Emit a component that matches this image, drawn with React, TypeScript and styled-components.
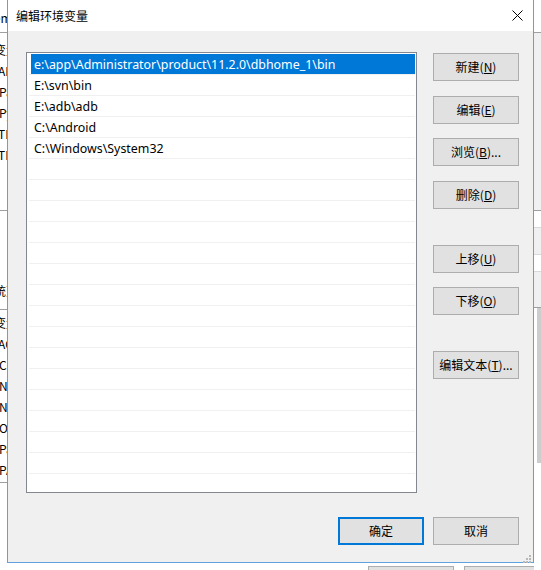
import React from 'react';
import styled, { createGlobalStyle } from 'styled-components';

const GlobalStyle = createGlobalStyle`
  html, body { margin: 0; padding: 0; background: #ffffff; overflow: hidden; }
  body {
    font-family: "Noto Sans", "Noto Sans CJK SC", sans-serif;
    font-size: 12px;
    color: #000;
  }
`;

const CJK = `"Noto Sans CJK SC", "Noto Sans", sans-serif`;
const LATIN = `"Noto Sans", "Noto Sans CJK SC", sans-serif`;

/* ---------- background window (visible only at the edges) ---------- */

const Desktop = styled.div`
  position: relative;
  width: 541px;
  height: 570px;
  overflow: hidden;
  background: #ffffff;
`;

const BgWindow = styled.div`
  display: flex;
  height: 100%;
`;

const BgLeft = styled.div`
  width: 7px;
  flex-shrink: 0;
  overflow: hidden;
  display: flex;
  flex-direction: column;
  background: #ffffff;
  padding-top: 6px;
  box-sizing: border-box;
`;

const BgRow = styled.div<{ $shift: number; $h?: number; $top?: number }>`
  height: ${(p) => p.$h ?? 21}px;
  line-height: ${(p) => p.$h ?? 21}px;
  margin-top: ${(p) => p.$top ?? 0}px;
  white-space: nowrap;
  margin-left: ${(p) => p.$shift}px;
  font-family: ${CJK};
  font-size: 12px;
  color: #000;
  flex-shrink: 0;
`;

const BgLine = styled.div<{ $gap: number }>`
  height: 1px;
  background: #a0a0a0;
  margin-top: ${(p) => p.$gap}px;
  flex-shrink: 0;
`;

const BgMiddle = styled.div`
  flex: 1;
  min-width: 0;
  overflow: hidden;
  display: flex;
  flex-direction: column;
  padding-top: 566px;
`;

const BgButtons = styled.div`
  display: flex;
  gap: 10px;
  padding-left: 361px;
`;

const BgButton = styled.div`
  width: 86px;
  height: 24px;
  flex-shrink: 0;
  box-sizing: border-box;
  border: 1px solid #adadad;
  background: #e1e1e1;
`;

const BgRight = styled.div`
  width: 7px;
  flex-shrink: 0;
  display: flex;
  flex-direction: column;
  background: #f0f0f0;
`;

const BgRightTop = styled.div`
  height: 32px;
  background: #ffffff;
  border-bottom: 1px solid #a0a0a0;
  flex-shrink: 0;
`;

const BgRightCell = styled.div<{ $h: number; $bg: string; $line?: string }>`
  height: ${(p) => p.$h}px;
  background: ${(p) => p.$bg};
  border-bottom: 1px solid ${(p) => p.$line ?? '#d9d9d9'};
  flex-shrink: 0;
`;

const BgScroll = styled.div`
  flex: 1;
  display: flex;
  justify-content: flex-end;
  background: #ffffff;
`;

const BgThumb = styled.div`
  width: 4px;
  height: 155px;
  background: #cdcdcd;
`;

/* ---------- dialog ---------- */

const Dialog = styled.div`
  position: absolute;
  left: 7px;
  top: 0;
  width: 527px;
  height: 563px;
  box-sizing: border-box;
  border: 1px solid #5fa2dd;
  border-top: none;
  display: flex;
  flex-direction: column;
  background: #f0f0f0;
`;

const TitleBar = styled.div`
  height: 31px;
  flex-shrink: 0;
  background: #ffffff;
  display: flex;
  align-items: center;
  justify-content: space-between;
  padding: 0 10px 0 8px;
`;

const Title = styled.div`
  font-family: ${CJK};
  font-size: 12px;
  color: #000;
  line-height: 16px;
`;

const Close = styled.div`
  width: 12px;
  height: 12px;
  display: flex;
  align-items: center;
  justify-content: center;
`;

const Body = styled.div`
  position: relative;
  flex: 1;
  display: flex;
  flex-direction: column;
  padding: 21px 14px 0 18px;
`;

const Main = styled.div`
  display: flex;
  gap: 16px;
`;

const ListBox = styled.div`
  width: 391px;
  height: 441px;
  box-sizing: border-box;
  border: 1px solid #828790;
  background: #ffffff;
  padding: 1px 1px 0 1px;
  overflow: hidden;
`;

const ListRow = styled.div`
  height: 20px;
  border-bottom: 1px solid #f0f0f0;
  margin-left: 1px;
  display: flex;
  align-items: center;
`;

const ListCell = styled.div<{ $selected?: boolean }>`
  flex: 1;
  height: 20px;
  line-height: 22px;
  padding-left: 3px;
  margin-left: 2px;
  background: ${(p) => (p.$selected ? '#0078d7' : 'transparent')};
  color: ${(p) => (p.$selected ? '#ffffff' : '#000000')};
  font-family: ${LATIN};
  font-size: 12.4px;
  white-space: nowrap;
`;

const ButtonColumn = styled.div`
  display: flex;
  flex-direction: column;
  padding-top: 1px;
`;

const Button = styled.div<{ $top?: number; $default?: boolean }>`
  width: 86px;
  height: 28px;
  box-sizing: border-box;
  margin-top: ${(p) => p.$top ?? 0}px;
  background: #e1e1e1;
  border: ${(p) => (p.$default ? '2px solid #0078d7' : '1px solid #adadad')};
  display: flex;
  align-items: center;
  justify-content: center;
  font-family: ${CJK};
  font-size: 12px;
  color: #000;
  line-height: 16px;
  flex-shrink: 0;
`;

const Key = styled.span`
  text-decoration: underline;
  text-underline-offset: 1px;
`;

const Footer = styled.div`
  display: flex;
  justify-content: flex-end;
  gap: 9px;
  margin-top: 24px;
`;

const Grip = styled.div`
  position: absolute;
  right: 2px;
  bottom: 3px;
  width: 9px;
  height: 9px;
`;

const entries = [
  'e:\\app\\Administrator\\product\\11.2.0\\dbhome_1\\bin',
  'E:\\svn\\bin',
  'E:\\adb\\adb',
  'C:\\Android',
  'C:\\Windows\\System32',
];

const ROWS = 20;

const Label = ({ text, k, tail = '' }: { text: string; k: string; tail?: string }) => (
  <span>
    {text}(<Key>{k}</Key>){tail}
  </span>
);

export default function App() {
  const rows = Array.from({ length: ROWS }, (_, i) => entries[i] ?? '');
  return (
    <>
      <GlobalStyle />
      <Desktop>
        <BgWindow>
          <BgLeft>
            <BgRow $shift={-14} $h={24}>Item</BgRow>
            <BgLine $gap={2} />
            <BgRow $shift={-6} $top={6}>变量</BgRow>
            <BgRow $shift={-2}>ALLUSERSPROFILE</BgRow>
            <BgRow $shift={-1}>Path</BgRow>
            <BgRow $shift={-1}>Python</BgRow>
            <BgRow $shift={-2}>TEMP</BgRow>
            <BgRow $shift={-2}>TMP</BgRow>
            <BgLine $gap={45} />
            <BgRow $shift={-18} $top={69}>系统变量</BgRow>
            <BgLine $gap={8} />
            <BgRow $shift={-6} $top={2}>变量</BgRow>
            <BgRow $shift={-2}>ACTIVE</BgRow>
            <BgRow $shift={-1}>ComSpec</BgRow>
            <BgRow $shift={-1}>NUMBER</BgRow>
            <BgRow $shift={-1}>NVM</BgRow>
            <BgRow $shift={-1}>OS</BgRow>
            <BgRow $shift={-1}>Path</BgRow>
            <BgRow $shift={-1}>PATHEXT</BgRow>
            <BgLine $gap={2} />
          </BgLeft>
          <BgMiddle>
            <BgButtons>
              <BgButton />
              <BgButton />
            </BgButtons>
          </BgMiddle>
          <BgRight>
            <BgRightTop />
            <BgRightCell $h={177} $bg="#f0f0f0" $line="#a0a0a0" />
            <BgRightCell $h={16} $bg="#ffffff" />
            <BgRightCell $h={26} $bg="#f0f0f0" />
            <BgRightCell $h={16} $bg="#ffffff" />
            <BgRightCell $h={35} $bg="#f0f0f0" $line="#a0a0a0" />
            <BgScroll>
              <BgThumb />
            </BgScroll>
          </BgRight>
        </BgWindow>

        <Dialog>
          <TitleBar>
            <Title>编辑环境变量</Title>
            <Close>
              <svg width="11" height="11" viewBox="0 0 11 11">
                <path d="M0.5 0.5 L10.5 10.5 M10.5 0.5 L0.5 10.5" stroke="#000" strokeWidth="1" fill="none" />
              </svg>
            </Close>
          </TitleBar>
          <Body>
            <Main>
              <ListBox>
                {rows.map((r, i) => (
                  <ListRow key={i}>
                    <ListCell $selected={i === 0}>{r}</ListCell>
                  </ListRow>
                ))}
              </ListBox>
              <ButtonColumn>
                <Button><Label text="新建" k="N" /></Button>
                <Button $top={15}><Label text="编辑" k="E" /></Button>
                <Button $top={14}><Label text="浏览" k="B" tail="..." /></Button>
                <Button $top={15}><Label text="删除" k="D" /></Button>
                <Button $top={36}><Label text="上移" k="U" /></Button>
                <Button $top={14}><Label text="下移" k="O" /></Button>
                <Button $top={36}><Label text="编辑文本" k="T" tail="..." /></Button>
              </ButtonColumn>
            </Main>
            <Footer>
              <Button $default>确定</Button>
              <Button>取消</Button>
            </Footer>
            <Grip>
              <svg width="9" height="9" viewBox="0 0 9 9">
                <rect x="7" y="1" width="2" height="2" fill="#b8b8b8" />
                <rect x="4" y="4" width="2" height="2" fill="#b8b8b8" />
                <rect x="7" y="4" width="2" height="2" fill="#b8b8b8" />
                <rect x="1" y="7" width="2" height="2" fill="#b8b8b8" />
                <rect x="4" y="7" width="2" height="2" fill="#b8b8b8" />
                <rect x="7" y="7" width="2" height="2" fill="#b8b8b8" />
              </svg>
            </Grip>
          </Body>
        </Dialog>
      </Desktop>
    </>
  );
}
